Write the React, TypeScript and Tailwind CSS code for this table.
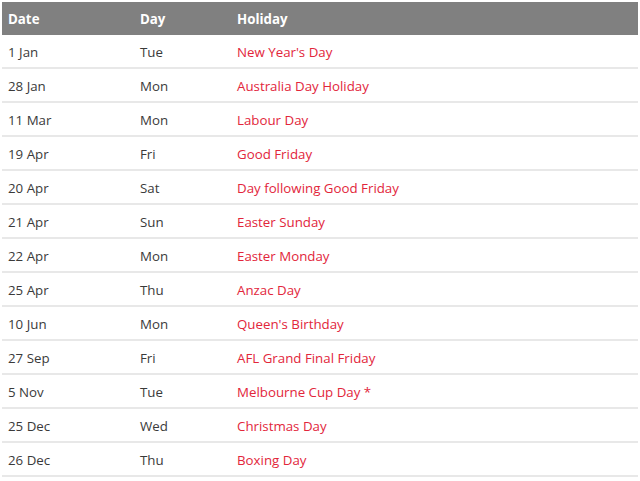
import React from "react";

type Row = { date: string; day: string; holiday: string };

const rows: Row[] = [
  { date: "1 Jan", day: "Tue", holiday: "New Year's Day" },
  { date: "28 Jan", day: "Mon", holiday: "Australia Day Holiday" },
  { date: "11 Mar", day: "Mon", holiday: "Labour Day" },
  { date: "19 Apr", day: "Fri", holiday: "Good Friday" },
  { date: "20 Apr", day: "Sat", holiday: "Day following Good Friday" },
  { date: "21 Apr", day: "Sun", holiday: "Easter Sunday" },
  { date: "22 Apr", day: "Mon", holiday: "Easter Monday" },
  { date: "25 Apr", day: "Thu", holiday: "Anzac Day" },
  { date: "10 Jun", day: "Mon", holiday: "Queen's Birthday" },
  { date: "27 Sep", day: "Fri", holiday: "AFL Grand Final Friday" },
  { date: "5 Nov", day: "Tue", holiday: "Melbourne Cup Day *" },
  { date: "25 Dec", day: "Wed", holiday: "Christmas Day" },
  { date: "26 Dec", day: "Thu", holiday: "Boxing Day" },
];

const App = () => {
  return (
    <div className="w-[640px] h-[481px] bg-white pt-[2px] pl-[2px] font-['Open_Sans',sans-serif] text-[13.3px]">
      <div className="w-[636px]">
        <div className="flex h-[33px] items-center pt-[2px] bg-[#808080] text-white font-bold">
          <div className="w-[132px] pl-[6px]">Date</div>
          <div className="w-[97px] pl-[6px]">Day</div>
          <div className="flex-1 pl-[6px]">Holiday</div>
        </div>
        {rows.map((r) => (
          <div
            key={r.date}
            className="flex h-[34px] items-center pt-[4px] border-b-2 border-[#e8e8e8] text-[#3a3a3a]"
          >
            <div className="w-[132px] pl-[6px]">{r.date}</div>
            <div className="w-[97px] pl-[6px]">{r.day}</div>
            <div className="flex-1 pl-[6px] text-[#e2263b]">{r.holiday}</div>
          </div>
        ))}
      </div>
    </div>
  );
};

export default App;
